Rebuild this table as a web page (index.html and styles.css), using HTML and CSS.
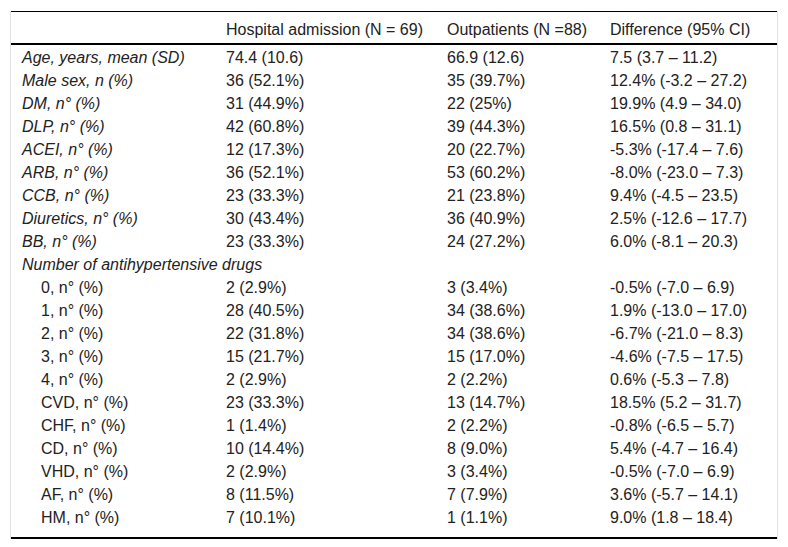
FILE: index.html
```html
<!DOCTYPE html>
<html>
<head>
<meta charset="utf-8">
<link rel="stylesheet" href="styles.css">
</head>
<body>
<div class="frame">
<table class="data">
<thead>
<tr><th class="c1"></th><th class="c2">Hospital admission (N = 69)</th><th class="c3">Outpatients (N =88)</th><th class="c4">Difference (95% CI)</th></tr>
</thead>
<tbody>
<tr><td class="lab it">Age, years, mean (SD)</td><td>74.4 (10.6)</td><td>66.9 (12.6)</td><td>7.5 (3.7 – 11.2)</td></tr>
<tr><td class="lab it">Male sex, n (%)</td><td>36 (52.1%)</td><td>35 (39.7%)</td><td>12.4% (-3.2 – 27.2)</td></tr>
<tr><td class="lab it">DM, n° (%)</td><td>31 (44.9%)</td><td>22 (25%)</td><td>19.9% (4.9 – 34.0)</td></tr>
<tr><td class="lab it">DLP, n° (%)</td><td>42 (60.8%)</td><td>39 (44.3%)</td><td>16.5% (0.8 – 31.1)</td></tr>
<tr><td class="lab it">ACEI, n° (%)</td><td>12 (17.3%)</td><td>20 (22.7%)</td><td>-5.3% (-17.4 – 7.6)</td></tr>
<tr><td class="lab it">ARB, n° (%)</td><td>36 (52.1%)</td><td>53 (60.2%)</td><td>-8.0% (-23.0 – 7.3)</td></tr>
<tr><td class="lab it">CCB, n° (%)</td><td>23 (33.3%)</td><td>21 (23.8%)</td><td>9.4% (-4.5 – 23.5)</td></tr>
<tr><td class="lab it">Diuretics, n° (%)</td><td>30 (43.4%)</td><td>36 (40.9%)</td><td>2.5% (-12.6 – 17.7)</td></tr>
<tr><td class="lab it">BB, n° (%)</td><td>23 (33.3%)</td><td>24 (27.2%)</td><td>6.0% (-8.1 – 20.3)</td></tr>
<tr><td class="lab it" colspan="4">Number of antihypertensive drugs</td></tr>
<tr><td class="lab ind">0, n° (%)</td><td>2 (2.9%)</td><td>3 (3.4%)</td><td>-0.5% (-7.0 – 6.9)</td></tr>
<tr><td class="lab ind">1, n° (%)</td><td>28 (40.5%)</td><td>34 (38.6%)</td><td>1.9% (-13.0 – 17.0)</td></tr>
<tr><td class="lab ind">2, n° (%)</td><td>22 (31.8%)</td><td>34 (38.6%)</td><td>-6.7% (-21.0 – 8.3)</td></tr>
<tr><td class="lab ind">3, n° (%)</td><td>15 (21.7%)</td><td>15 (17.0%)</td><td>-4.6% (-7.5 – 17.5)</td></tr>
<tr><td class="lab ind">4, n° (%)</td><td>2 (2.9%)</td><td>2 (2.2%)</td><td>0.6% (-5.3 – 7.8)</td></tr>
<tr><td class="lab ind">CVD, n° (%)</td><td>23 (33.3%)</td><td>13 (14.7%)</td><td>18.5% (5.2 – 31.7)</td></tr>
<tr><td class="lab ind">CHF, n° (%)</td><td>1 (1.4%)</td><td>2 (2.2%)</td><td>-0.8% (-6.5 – 5.7)</td></tr>
<tr><td class="lab ind">CD, n° (%)</td><td>10 (14.4%)</td><td>8 (9.0%)</td><td>5.4% (-4.7 – 16.4)</td></tr>
<tr><td class="lab ind">VHD, n° (%)</td><td>2 (2.9%)</td><td>3 (3.4%)</td><td>-0.5% (-7.0 – 6.9)</td></tr>
<tr><td class="lab ind">AF, n° (%)</td><td>8 (11.5%)</td><td>7 (7.9%)</td><td>3.6% (-5.7 – 14.1)</td></tr>
<tr><td class="lab ind">HM, n° (%)</td><td>7 (10.1%)</td><td>1 (1.1%)</td><td>9.0% (1.8 – 18.4)</td></tr>
</tbody>
</table>
</div>
</body>
</html>
```

FILE: styles.css
```css
html, body {
  margin: 0;
  padding: 0;
  background: #ffffff;
}
body {
  font-family: "Liberation Sans", Arial, sans-serif;
  font-size: 16px;
  color: #222222;
}
.frame {
  margin: 11px 10px 0 10px;
  width: 766px;
  border-left: 1px solid #e2e2e2;
  border-right: 1px solid #e2e2e2;
}
.data {
  width: 766px;
  border-collapse: collapse;
  table-layout: fixed;
  border-top: 1px solid #000;
  border-bottom: 2px solid #000;
}
.data th {
  font-weight: normal;
  text-align: left;
  line-height: 19px;
  padding: 8px 0 4px 11px;
  border-bottom: 2px solid #000;
}
.c1 { width: 193px; }
.c2 { width: 210px; }
.c3 { width: 152px; }
.data td {
  text-align: left;
  line-height: 19px;
  padding: 2px 0 2px 11px;
  white-space: nowrap;
}
.data tbody tr:first-child td { padding-top: 3px; }
.data tbody tr:last-child td { padding-bottom: 10px; }
.it { font-style: italic; }
.ind { padding-left: 30px !important; }
```
